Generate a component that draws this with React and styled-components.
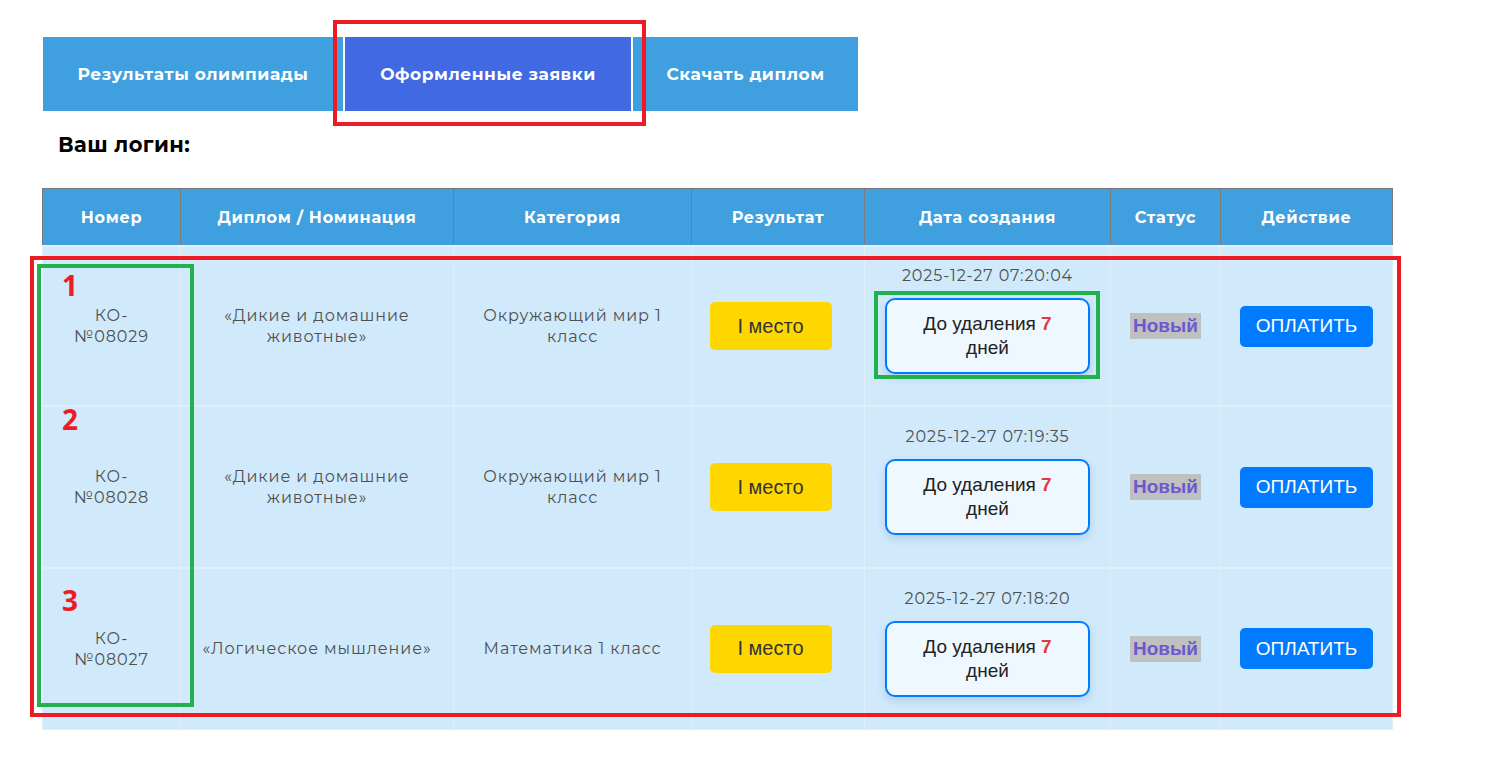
import styled, { createGlobalStyle } from 'styled-components'

const GlobalStyle = createGlobalStyle`
	body {
		margin: 0;
		background: #fff;
		font-family: 'Montserrat', 'Inter', 'Noto Sans', sans-serif;
	}
`

const tabs = [
	{ label: 'Результаты олимпиады', width: 300 },
	{ label: 'Оформленные заявки', width: 286, active: true },
	{ label: 'Скачать диплом', width: 225 },
]

const columns = [
	{ title: 'Номер', width: 138 },
	{ title: 'Диплом / Номинация', width: 273 },
	{ title: 'Категория', width: 238 },
	{ title: 'Результат', width: 173 },
	{ title: 'Дата создания', width: 246 },
	{ title: 'Статус', width: 110 },
	{ title: 'Действие', width: 172 },
]

const orders = [
	{
		number: 'КО-\n№08029',
		nomination: '«Дикие и домашние\nживотные»',
		category: 'Окружающий мир 1\nкласс',
		date: '2025-12-27 07:20:04',
		height: 160,
	},
	{
		number: 'КО-\n№08028',
		nomination: '«Дикие и домашние\nживотные»',
		category: 'Окружающий мир 1\nкласс',
		date: '2025-12-27 07:19:35',
		height: 162,
	},
	{
		number: 'КО-\n№08027',
		nomination: '«Логическое мышление»',
		category: 'Математика 1 класс',
		date: '2025-12-27 07:18:20',
		height: 161,
	},
]

// annotation frames drawn over the screenshot
const marks = [
	{ type: 'red', top: 20, left: 333, width: 313, height: 106 },
	{ type: 'red', top: 256, left: 30, width: 1371, height: 461 },
	{ type: 'green', top: 264, left: 37, width: 157, height: 443 },
	{ type: 'green', top: 291, left: 874, width: 226, height: 88 },
]

const labels = [
	{ text: '1', top: 266, left: 62 },
	{ text: '2', top: 400, left: 62 },
	{ text: '3', top: 581, left: 62 },
]

export default function App() {
	return (
		<Page>
			<GlobalStyle />
			<TabBar>
				{tabs.map((tab) => (
					<Tab key={tab.label} $width={tab.width} $active={tab.active}>
						{tab.label}
					</Tab>
				))}
			</TabBar>
			<Login>Ваш логин:</Login>
			<Table>
				<colgroup>
					{columns.map((col) => (
						<col key={col.title} style={{ width: col.width }} />
					))}
				</colgroup>
				<thead>
					<tr>
						{columns.map((col) => (
							<HeadCell key={col.title}>{col.title}</HeadCell>
						))}
					</tr>
				</thead>
				<tbody>
					{orders.map((order) => (
						<tr key={order.number} style={{ height: order.height }}>
							<Cell>{order.number}</Cell>
							<Cell>{order.nomination}</Cell>
							<Cell>{order.category}</Cell>
							<Cell>
								<Place>I место</Place>
							</Cell>
							<Cell>
								<DateText>{order.date}</DateText>
								<Expiry>
									До удаления <Days>7</Days>
									<br />
									дней
								</Expiry>
							</Cell>
							<Cell>
								<Status>Новый</Status>
							</Cell>
							<Cell>
								<PayButton>Оплатить</PayButton>
							</Cell>
						</tr>
					))}
				</tbody>
			</Table>
			{marks.map((m, i) => (
				<Mark key={i} $type={m.type} style={{ top: m.top, left: m.left, width: m.width, height: m.height }} />
			))}
			{labels.map((l) => (
				<Label key={l.text} style={{ top: l.top, left: l.left }}>
					{l.text}
				</Label>
			))}
		</Page>
	)
}

const Page = styled.div`
	position: relative;
	min-height: 773px;
	padding: 37px 0 0 42px;
	box-sizing: border-box;
`

const TabBar = styled.div`
	display: flex;
	gap: 2px;
	margin-left: 1px;
`

const Tab = styled.div`
	width: ${(p) => p.$width}px;
	height: 74px;
	display: flex;
	align-items: center;
	justify-content: center;
	background: ${(p) => (p.$active ? '#4169e1' : '#409fdf')};
	color: #fff;
	font-size: 17px;
	font-weight: 700;
	letter-spacing: 0.55px;
`

const Login = styled.h3`
	margin: 0;
	padding: 20px 0 0 16px;
	height: 57px;
	box-sizing: border-box;
	font-size: 21px;
	font-weight: 700;
	color: #000;
	line-height: 28px;
	letter-spacing: 0.4px;
`

const Table = styled.table`
	border-collapse: collapse;
	table-layout: fixed;
	width: 1350px;
	margin-top: 20px;
	background: #d0e9fb;
`

const HeadCell = styled.th`
	height: 56px;
	padding: 0 4px;
	background: #409fdf;
	border: 1px solid #7a7a7a;
	color: #fff;
	font-size: 16px;
	font-weight: 700;
	letter-spacing: 0.7px;
	text-align: center;
`

const Cell = styled.td`
	padding: 8px 8px;
	border: 1px solid #e0f0fb;
	border-top-width: 2px;
	text-align: center;
	vertical-align: middle;
	color: #505050;
	font-size: 16px;
	line-height: 21px;
	letter-spacing: 0.9px;
	white-space: pre-line;
`

const Place = styled.div`
	display: inline-flex;
	align-items: center;
	justify-content: center;
	width: 122px;
	height: 48px;
	margin-right: 15px;
	border-radius: 5px;
	background: #ffd700;
	color: #333;
	font-family: 'Liberation Sans', Arial, sans-serif;
	font-size: 20px;
	letter-spacing: 0;
`

const DateText = styled.div`
	line-height: 20px;
	margin-top: -2px;
`

const Expiry = styled.div`
	width: 205px;
	height: 76px;
	margin: 12px auto 10px;
	padding-top: 12px;
	box-sizing: border-box;
	border: 2px solid #007bff;
	border-radius: 10px;
	background: #f0f8ff;
	box-shadow: 0 4px 8px rgba(0, 60, 140, 0.14);
	color: #222;
	font-family: 'Liberation Sans', Arial, sans-serif;
	font-size: 19px;
	line-height: 24px;
	letter-spacing: 0;
	white-space: normal;
	text-align: center;
`

const Days = styled.span`
	color: #e03c3c;
	font-weight: 700;
`

const Status = styled.span`
	display: inline-block;
	padding: 2px 3px;
	background: #c0c0c0;
	color: #6a5acd;
	font-family: 'Liberation Sans', Arial, sans-serif;
	font-size: 19px;
	font-weight: 700;
	line-height: 22px;
	letter-spacing: 0;
`

const PayButton = styled.button`
	width: 133px;
	height: 41px;
	border: none;
	border-radius: 5px;
	background: #007bff;
	color: #fff;
	font-family: 'Liberation Sans', Arial, sans-serif;
	font-size: 19px;
	text-transform: uppercase;
	cursor: pointer;
`

const Mark = styled.div`
	position: absolute;
	box-sizing: border-box;
	border: 4px solid ${(p) => (p.$type === 'red' ? '#ed1c24' : '#22b14c')};
	pointer-events: none;
`

const Label = styled.div`
	position: absolute;
	color: #ed1c24;
	font-family: 'Open Sans', sans-serif;
	font-size: 28px;
	font-weight: 700;
	line-height: 38px;
`
